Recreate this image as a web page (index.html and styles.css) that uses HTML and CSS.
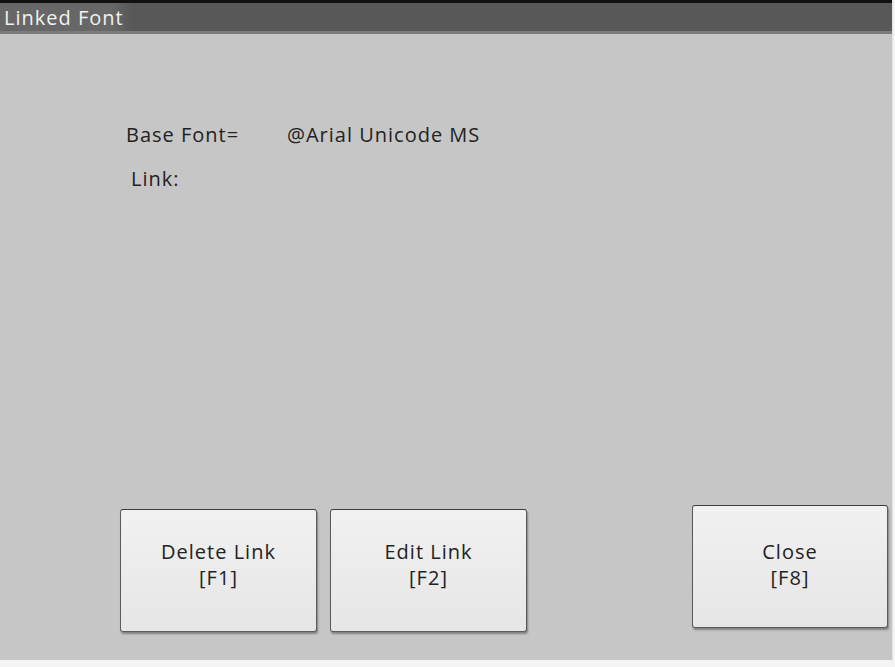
FILE: index.html
```html
<!DOCTYPE html>
<html>
<head>
  <title>Linked Font</title>
  <meta charset="UTF-8" />
  <link rel="stylesheet" href="styles.css">
</head>
<body>
  <div class="window">
    <div class="title-bar">
      <span class="title-text">Linked Font</span>
    </div>

    <div class="content">
      <div class="info">
        <div class="info-row">
          <span class="info-label">Base Font=</span>
          <span class="info-value">@Arial Unicode MS</span>
        </div>
        <div class="info-row link-row">
          <span class="info-label">Link:</span>
        </div>
      </div>

      <div class="actions">
        <button class="key-button">Delete Link<br>[F1]</button>
        <button class="key-button">Edit Link<br>[F2]</button>
        <button class="key-button close-button">Close<br>[F8]</button>
      </div>
    </div>
  </div>
</body>
</html>
```

FILE: styles.css
```css
:root {
  --window-bg: #c6c6c6;
  --title-bg: #585858;
  --title-text-bg: #676767;
  --button-bg: #ededed;
  --button-border: #5a5a5a;
  --text: #222;
}

body {
  margin: 0;
  padding: 0;
  background-color: #f4f4f4;
  font-family: 'Open Sans', 'Noto Sans', sans-serif;
  color: var(--text);
}

.window {
  width: 892px;
  height: 660px;
  display: flex;
  flex-direction: column;
  background-color: var(--window-bg);
  border-right: 1px solid #e2e2e2;
}

/* Title bar */
.title-bar {
  height: 28px;
  border-top: 3px solid #111;
  border-bottom: 3px solid #7c7c7c;
  background-color: var(--title-bg);
  display: flex;
  align-items: center;
}

.title-text {
  height: 100%;
  display: flex;
  align-items: center;
  padding: 0 8px 0 4px;
  background: linear-gradient(to right, var(--title-text-bg) 85%, var(--title-bg));
  color: #f2f2f2;
  font-size: 20px;
  letter-spacing: 1px;
}

/* Info rows */
.content {
  flex: 1;
  display: flex;
  flex-direction: column;
}

.info {
  flex: 1;
  padding: 87px 0 0 126px;
  font-size: 20px;
  letter-spacing: 1px;
}

.info-row {
  display: flex;
  height: 26px;
  align-items: center;
}

.link-row {
  margin-top: 18px;
  padding-left: 5px;
}

.info-label {
  width: 161px;
}

/* Buttons */
.actions {
  display: flex;
  align-items: flex-start;
  gap: 13px;
  padding: 0 4px 28px 120px;
}

.key-button {
  width: 197px;
  height: 123px;
  margin-top: 4px;
  background: linear-gradient(to bottom, #f1f1f1, #e6e6e6);
  border: 1px solid var(--button-border);
  border-top-color: #3c3c3c;
  border-radius: 3px;
  box-shadow: 1px 2px 2px rgba(0, 0, 0, 0.35);
  font-family: 'Open Sans', 'Noto Sans', sans-serif;
  font-size: 20px;
  letter-spacing: 1px;
  line-height: 26px;
  color: var(--text);
  padding: 0 0 12px 0;
}

.close-button {
  margin-top: 0;
  margin-left: auto;
  width: 196px;
  padding-bottom: 4px;
}
```
